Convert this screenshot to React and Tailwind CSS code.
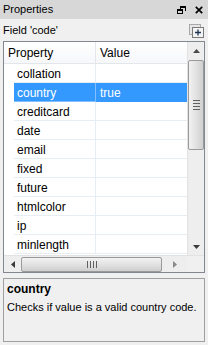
import React from "react";

const rows = [
  ["collation", ""],
  ["country", "true"],
  ["creditcard", ""],
  ["date", ""],
  ["email", ""],
  ["fixed", ""],
  ["future", ""],
  ["htmlcolor", ""],
  ["ip", ""],
  ["minlength", ""],
];

function FloatIcon() {
  return (
    <svg width="9" height="8" viewBox="0 0 9 8" className="block">
      <path d="M3 0h6v5H8V2H4v1H3z" fill="#000" />
      <path d="M0 3h6v5H0z M1 5v2h4V5z" fill="#000" fillRule="evenodd" />
    </svg>
  );
}

function CloseIcon() {
  return (
    <svg width="8" height="8" viewBox="0 0 8 8" className="block">
      <path d="M0.8 0.8L7.2 7.2M7.2 0.8L0.8 7.2" stroke="#000" strokeWidth="1.7" />
    </svg>
  );
}

function AddIcon() {
  return (
    <svg width="15" height="14" viewBox="0 0 15 14" className="block">
      <rect x="0.5" y="0.5" width="11" height="10" fill="#e6e6e6" stroke="#a8a8a8" />
      <rect x="3.5" y="3.5" width="11" height="10" fill="#f4f4f4" stroke="#7a7a7a" />
      <path d="M9 5.5v6M6 8.5h6" stroke="#1c3552" strokeWidth="1.3" />
    </svg>
  );
}

function Tri({ dir, color = "#4a4a4a" }) {
  const d = {
    up: "M0 4L3.5 0L7 4z",
    down: "M0 0L7 0L3.5 4z",
    left: "M4 0L4 7L0 3.5z",
    right: "M0 0L4 3.5L0 7z",
  }[dir];
  const w = dir === "up" || dir === "down" ? 7 : 4;
  const h = dir === "up" || dir === "down" ? 4 : 7;
  return (
    <svg width={w} height={h} viewBox={`0 0 ${w} ${h}`} className="block">
      <path d={d} fill={color} />
    </svg>
  );
}

export default function App() {
  return (
    <div className="w-[208px] h-[345px] bg-[#f0f0f0] flex flex-col font-['Liberation_Sans',Arial,sans-serif] text-black overflow-hidden">
      {/* Title bar */}
      <div className="h-[19px] bg-[#d7d7d7] flex items-center pl-[3px] pr-[5px] text-[11px] leading-none">
        <span className="flex-1">Properties</span>
        <div className="flex items-center gap-[9px] mt-[1px]">
          <FloatIcon />
          <CloseIcon />
        </div>
      </div>

      {/* Field row */}
      <div className="h-[22px] flex items-center pl-[3px] pr-[4px]">
        <span className="flex-1 text-[11px] leading-none mt-[1px]">Field 'code'</span>
        <div className="mt-[1px]">
          <AddIcon />
        </div>
      </div>

      {/* Grid */}
      <div className="mx-[3px] h-[232px] border border-[#828790] bg-white flex flex-col">
        <div className="flex flex-1 min-h-0">
          <div className="flex-1 flex flex-col min-w-0">
            {/* Header */}
            <div className="h-[22px] flex bg-gradient-to-b from-white to-[#f6f7f9] border-b border-[#e3e6ea] text-[12px]">
              <div className="w-[92px] pl-[4px] flex items-center border-r border-[#e3e6ea]">Property</div>
              <div className="flex-1 pl-[4px] flex items-center">Value</div>
            </div>
            {/* Rows */}
            {rows.map(([name, val], i) => {
              const sel = i === 1;
              return (
                <div key={name} className="h-[19px] flex text-[12px]">
                  <div className="w-[10px] bg-white" />
                  <div
                    className={
                      "w-[82px] pl-[3px] pt-[1px] flex items-center border-r border-b " +
                      (sel ? "bg-[#3399ff] text-white border-[#7fbfff]" : "border-[#e6edf5]")
                    }
                  >
                    {name}
                  </div>
                  <div
                    className={
                      "flex-1 pl-[4px] pt-[1px] flex items-center border-b " +
                      (sel ? "bg-[#3399ff] text-white border-[#3399ff]" : "border-[#e6edf5]")
                    }
                  >
                    {val}
                  </div>
                </div>
              );
            })}
          </div>
          {/* Vertical scrollbar */}
          <div className="w-[17px] bg-[#eeeeee] border-l border-[#e2e2e2] flex flex-col items-center">
            <div className="h-[17px] flex items-center justify-center pt-[1px]">
              <Tri dir="up" />
            </div>
            <div className="mt-[1px] w-[16px] h-[90px] rounded-[2px] border border-[#9a9a9a] bg-gradient-to-r from-[#f2f2f2] via-[#e2e2e2] to-[#cfcfcf] flex items-center justify-center">
              <div className="flex flex-col gap-[2px]">
                <div className="w-[7px] h-[1px] bg-[#606060]" />
                <div className="w-[7px] h-[1px] bg-[#606060]" />
                <div className="w-[7px] h-[1px] bg-[#606060]" />
                <div className="w-[7px] h-[1px] bg-[#606060]" />
              </div>
            </div>
            <div className="flex-1" />
            <div className="h-[17px] flex items-center justify-center">
              <Tri dir="down" color="#3a3a3a" />
            </div>
          </div>
        </div>
        {/* Horizontal scrollbar */}
        <div className="h-[17px] flex bg-[#eeeeee] border-t border-[#e2e2e2]">
          <div className="flex-1 flex items-center">
            <div className="w-[17px] flex items-center justify-center">
              <Tri dir="left" color="#3a3a3a" />
            </div>
            <div className="w-[141px] h-[15px] rounded-[2px] border border-[#9a9a9a] bg-gradient-to-b from-[#f2f2f2] via-[#e2e2e2] to-[#cfcfcf] flex items-center justify-center">
              <div className="flex gap-[2px]">
                <div className="w-[1px] h-[7px] bg-[#606060]" />
                <div className="w-[1px] h-[7px] bg-[#606060]" />
                <div className="w-[1px] h-[7px] bg-[#606060]" />
                <div className="w-[1px] h-[7px] bg-[#606060]" />
              </div>
            </div>
            <div className="flex-1 flex items-center justify-center">
              <Tri dir="right" color="#8a8a8a" />
            </div>
          </div>
          <div className="w-[17px] bg-[#f0f0f0]" />
        </div>
      </div>

      {/* Description */}
      <div className="mx-[3px] mt-[5px] h-[64px] border border-[#a0a0a0] bg-[#f0f0f0] px-[3px] pt-[3px]">
        <div className="text-[12px] font-bold leading-[15px]">country</div>
        <div className="text-[11px] leading-[14px] mt-[3px]">Checks if value is a valid country code.</div>
      </div>
    </div>
  );
}
